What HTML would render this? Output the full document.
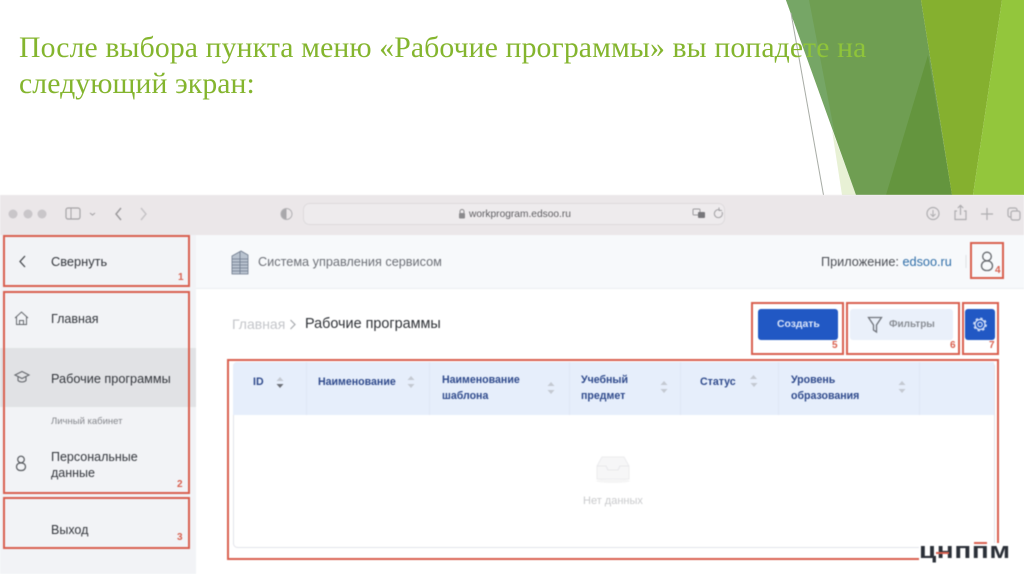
<!DOCTYPE html>
<html lang="ru"><head><meta charset="utf-8"><title>Рабочие программы</title>
<style>
html,body{margin:0;padding:0;background:#fff;}
#p{position:relative;width:1024px;height:574px;overflow:hidden;background:#fff;font-family:"Liberation Sans",sans-serif;}
.a{position:absolute;}
.t{position:absolute;white-space:nowrap;}
.s{position:absolute;left:0;top:0;width:1024px;height:574px;}
.r{position:absolute;border:2px solid #d9604f;box-sizing:border-box;}
.n{position:absolute;color:#d9604f;font-weight:bold;font-size:10px;line-height:10px;}
.h{position:absolute;color:#2f4a8c;font-weight:bold;font-size:10.6px;line-height:16px;white-space:nowrap;}
.m{position:absolute;color:#33363c;font-size:12.5px;line-height:16px;white-space:nowrap;}
#blur{position:absolute;left:0;top:0;width:1024px;height:574px;filter:blur(.5px);}
</style></head><body><div id="p">
<svg class="s" viewBox="0 0 1024 574">
<polygon points="832,130 856,195 842,195" fill="#e8f1d5"/>
<polygon points="786,0 921,0 952,195 856,195" fill="#6f9e52"/>
<polygon points="786,0 809,0 835,135" fill="#76a666"/>
<polygon points="928,55 952,195 886,195" fill="#64953e"/>
<polygon points="921,0 1002,0 973,195 952,195" fill="#85b02f"/>
<polygon points="1002,0 1024,0 1024,195 973,195" fill="#93c63c"/>
<line x1="791" y1="13" x2="823.500" y2="195" stroke="#a8aca6" stroke-width="1"/>
</svg>
<div class="t" style="left:19px;top:33px;font:29.7px/30px 'Liberation Serif',serif;color:#84b52e;letter-spacing:.13px;filter:blur(.3px);">После выбора пункта меню «Рабочие программы» вы попаде<span style="color:#8fc43a">те на</span></div>
<div class="t" style="left:19px;top:69px;font:29.7px/30px 'Liberation Serif',serif;color:#84b52e;letter-spacing:.1px;filter:blur(.3px);">следующий экран:</div>
<div id="blur">
<div class="a" style="left:0;top:195px;width:1024px;height:40px;background:#ebe7e9;"></div>
<div class="a" style="left:0;top:235px;width:1024px;height:339px;background:#fff;"></div>
<div class="a" style="left:0;top:235px;width:196px;height:339px;background:#f2f3f6;"></div>
<div class="a" style="left:196px;top:235px;width:828px;height:54px;background:#f7f9fb;border-bottom:1px solid #eceef1;box-sizing:border-box;"></div>
<div class="a" style="left:0;top:348px;width:196px;height:59px;background:#e1e2e5;"></div>
<svg class="s" viewBox="0 0 1024 574" fill="none">
<circle cx="13" cy="214" r="4.500" fill="#c9c6c9"/><circle cx="28" cy="214" r="4.500" fill="#c9c6c9"/><circle cx="42" cy="214" r="4.500" fill="#c9c6c9"/>
<rect x="66" y="208" width="14" height="11" rx="2" stroke="#a5a3a6" stroke-width="1.200"/><line x1="71" y1="208" x2="71" y2="219" stroke="#a5a3a6"/>
<path d="M90 213l2.500 2 2.500-2" stroke="#a5a3a6" stroke-width="1.100"/>
<path d="M121 208l-5 6 5 6" stroke="#9a989b" stroke-width="1.400"/>
<path d="M141 208l5 6-5 6" stroke="#c5c3c6" stroke-width="1.400"/>
<path d="M286.500 208.500a5.500 5.500 0 0 0 0 11z" fill="#a9a8ab"/><circle cx="286.500" cy="214" r="5.500" stroke="#b2b1b4"/>
<rect x="303.500" y="203.500" width="421" height="21" rx="6" fill="#eeebed" stroke="#dedbdd"/>
<rect x="459" y="213" width="6" height="5.500" rx="1" fill="#8b8a8d"/><path d="M460 213v-1.500a2 2 0 0 1 4 0v1.500" stroke="#8b8a8d"/>
<rect x="693" y="209" width="7" height="6" rx="1" stroke="#9c9b9e"/><rect x="698" y="212" width="7" height="6" rx="1" fill="#77767a"/>
<path d="M722 212a4 4 0 1 1-2-2M719 207.500v3h3" stroke="#a4a3a6"/>
<circle cx="933" cy="213.500" r="6" stroke="#aeadb0" stroke-width="1.200"/><path d="M933 210v6.500M930.500 214l2.500 2.500 2.500-2.500" stroke="#aeadb0"/>
<path d="M957 211h-2v8.500h11V211h-2M960.500 215V205.500M957.800 208l2.700-2.700 2.700 2.700" stroke="#aeadb0" stroke-width="1.200"/>
<path d="M987 208v12M981 214h12" stroke="#aeadb0" stroke-width="1.200"/>
<rect x="1008" y="208" width="9" height="9" rx="2" stroke="#aeadb0" stroke-width="1.200"/><rect x="1011" y="211" width="9" height="9" rx="2" fill="#ebe7e9" stroke="#aeadb0" stroke-width="1.200"/>
<path d="M25 256l-5 5.500 5 5.500" stroke="#44474c" stroke-width="1.300"/>
<path d="M15.500 318l6.500-6 6.500 6M17 317v7.500h10V317M20 324.500v-4h4v4" transform="translate(-0.500,0)" stroke="#65686d" stroke-width="1"/>
<path d="M15 375l7-3.500 7 3.500-7 3.500zM18 377v3.500c2 2 6 2 8 0V377" stroke="#65686d" stroke-width="1.100"/>
<circle cx="21" cy="459.500" r="3.300" stroke="#55585d" stroke-width="1.200"/><rect x="16.500" y="463" width="9" height="7.500" rx="3.700" stroke="#55585d" stroke-width="1.200"/>
<g stroke="#6e7a8d" stroke-width=".8"><path d="M232 256l9-5 7 4v19h-16z" fill="#b9c3cf"/><path d="M232 259h16M232 262h16M232 265h16M232 268h16M232 271h16M240 252v22"/></g>
<circle cx="987" cy="256.500" r="4.300" stroke="#66696e" stroke-width="1.300"/><rect x="981.500" y="261" width="11" height="9.500" rx="4.700" stroke="#66696e" stroke-width="1.300"/>
<line x1="966" y1="255" x2="966" y2="268" stroke="#dfe1e4"/>
<path d="M290.500 320l4.500 4.500-4.500 4.500" stroke="#a6a9ad" stroke-width="1.200"/>
<rect x="233.500" y="362.500" width="761" height="185" rx="4" fill="#fff" stroke="#e2e3ea"/>
<path d="M233 366a4 4 0 0 1 4-4h757v53H233z" fill="#e6eefb"/>
<path d="M306.500 362v53M429.500 362v53M569.500 362v53M680.500 362v53M778.500 362v53M919.500 362v53" stroke="#dfe7f4"/>
<g fill="#c4c9d2"><path d="M280 377l3.500 4h-7zM411 376l3.500 4h-7zM551 382l3.500 4h-7zM753.500 375l3.500 4h-7zM902 381l3.500 4h-7zM664 381l3.500 4h-7z"/>
<path d="M411 388l3.500-4h-7zM551 394l3.500-4h-7zM754 387l3.500-4h-7zM902 393l3.500-4h-7zM664 393l3.500-4h-7z"/></g>
<path d="M280 388l3.500-4h-7z" fill="#6d7078"/>
<path d="M597 466l5-9h22l5 9v13h-32z" fill="#f6f6f7" stroke="#ececee"/><path d="M597 466h9l2 4h10l2-4h9" stroke="#e8e8ea"/>
<ellipse cx="613" cy="481" rx="17" ry="2" fill="#f5f5f5"/>
<rect x="758" y="309" width="80" height="31" rx="3" fill="#2158c4"/>
<rect x="850" y="309" width="103" height="31" rx="3" fill="#eaf0fa"/>
<rect x="965" y="309" width="30" height="31" rx="3" fill="#2158c4"/>
<path d="M868.500 317.500h13l-5 7.500v7l-3 -2v-5z" stroke="#70747c" stroke-width="1.300"/>
<circle cx="980" cy="324.500" r="5" stroke="#dce6fa" stroke-width="1.200"/><circle cx="980" cy="324.500" r="6.300" stroke="#dce6fa" stroke-width="1.200" stroke-dasharray="2.500 2.450"/><circle cx="980" cy="324.500" r="2.200" stroke="#dce6fa" stroke-width="1.100"/>
</svg>
<div class="t" style="left:469px;top:208px;font-size:10.2px;line-height:13px;color:#5f5e62;">workprogram.edsoo.ru</div>
<div class="m" style="left:51px;top:254px;font-size:12.8px;">Свернуть</div>
<div class="m" style="left:51px;top:311px;">Главная</div>
<div class="m" style="left:51px;top:371px;font-size:12.7px;">Рабочие программы</div>
<div class="t" style="left:51px;top:416px;font-size:9.5px;line-height:12px;color:#85878c;">Личный кабинет</div>
<div class="m" style="left:51px;top:449px;">Персональные<br>данные</div>
<div class="m" style="left:51px;top:522px;">Выход</div>
<div class="t" style="left:258px;top:254px;font-size:12.700px;line-height:16px;color:#6d7077;">Система управления сервисом</div>
<div class="t" style="left:821px;top:254px;font-size:12.700px;line-height:16px;color:#4b4e54;">Приложение: <span style="color:#2f6ea8">edsoo.ru</span></div>
<div class="t" style="left:232px;top:316px;font-size:14px;line-height:16px;color:#c4c6ca;">Главная</div>
<div class="t" style="left:305px;top:316px;font-size:14.400px;line-height:16px;color:#303338;">Рабочие программы</div>
<div class="t" style="left:777px;top:318px;font-size:10.400px;line-height:14px;color:#dce6fa;font-weight:bold;">Создать</div>
<div class="t" style="left:889px;top:318px;font-size:10px;line-height:14px;color:#8a8e95;font-weight:bold;">Фильтры</div>
<div class="h" style="left:253px;top:374px;">ID</div>
<div class="h" style="left:318px;top:374px;">Наименование</div>
<div class="h" style="left:442px;top:372px;">Наименование<br>шаблона</div>
<div class="h" style="left:581px;top:372px;">Учебный<br>предмет</div>
<div class="h" style="left:700px;top:374px;">Статус</div>
<div class="h" style="left:791px;top:372px;">Уровень<br>образования</div>
<div class="t" style="left:583px;top:495px;font-size:11px;line-height:13px;color:#c9cacc;">Нет данных</div>
<div class="r" style="left:3px;top:235px;width:187px;height:52px;"></div>
<div class="r" style="left:3px;top:291px;width:187px;height:203px;"></div>
<div class="r" style="left:3px;top:497px;width:187px;height:52px;"></div>
<div class="r" style="left:970px;top:242px;width:34px;height:37px;"></div>
<div class="r" style="left:751px;top:302px;width:93px;height:53px;"></div>
<div class="r" style="left:846px;top:302px;width:114px;height:53px;"></div>
<div class="r" style="left:962px;top:302px;width:37px;height:53px;"></div>
<div class="r" style="left:227px;top:359px;width:772px;height:201px;"></div>
<div class="n" style="left:178px;top:273px;">1</div>
<div class="n" style="left:177px;top:480px;">2</div>
<div class="n" style="left:177px;top:533px;">3</div>
<div class="n" style="left:995px;top:266px;">4</div>
<div class="n" style="left:832px;top:341px;">5</div>
<div class="n" style="left:950px;top:341px;">6</div>
<div class="n" style="left:989px;top:341px;">7</div>
<div class="a" style="left:919px;top:543px;width:105px;height:31px;background:#fff;"></div>
<div class="t" style="left:919px;top:540px;font-size:22px;line-height:22px;font-weight:bold;color:#2b3038;letter-spacing:.5px;transform:scaleX(1.27);transform-origin:left;">цнппм</div>
<div class="a" style="left:936px;top:552px;width:13px;height:2px;background:#d9604f;"></div>
<div class="a" style="left:974px;top:542px;width:13px;height:2px;background:#d9604f;"></div>
</div>
</div></body></html>
